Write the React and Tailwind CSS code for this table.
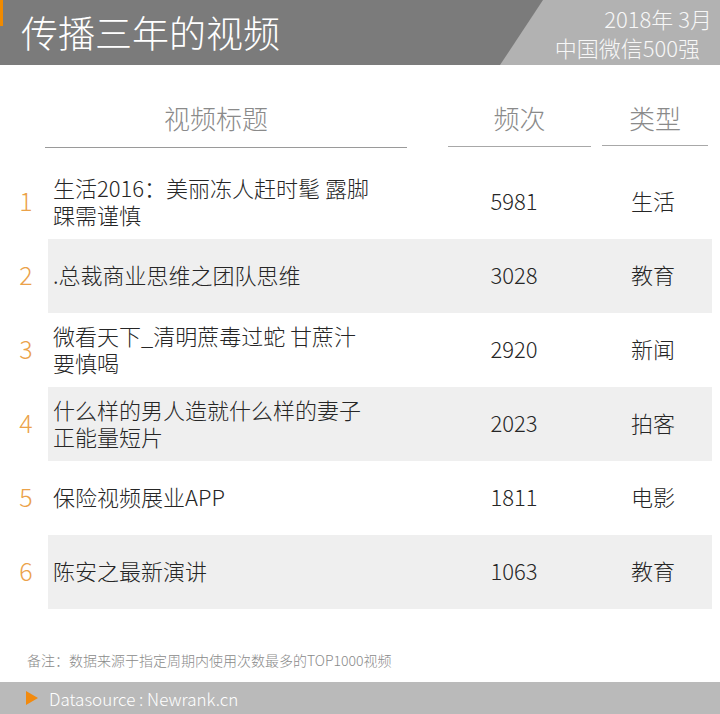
import React from "react";

const rows = [
  { n: "1", t: ["生活2016：美丽冻人赶时髦 露脚", "踝需谨慎"], c: "5981", k: "生活", g: false },
  { n: "2", t: [".总裁商业思维之团队思维"], c: "3028", k: "教育", g: true },
  { n: "3", t: ["微看天下_清明蔗毒过蛇 甘蔗汁", "要慎喝"], c: "2920", k: "新闻", g: false },
  { n: "4", t: ["什么样的男人造就什么样的妻子", "正能量短片"], c: "2023", k: "拍客", g: true },
  { n: "5", t: ["保险视频展业APP"], c: "1811", k: "电影", g: false },
  { n: "6", t: ["陈安之最新演讲"], c: "1063", k: "教育", g: true },
];

export default function App() {
  return (
    <div
      className="w-[720px] h-[714px] bg-white flex flex-col overflow-hidden"
      style={{ fontFamily: '"Noto Sans CJK SC", "Noto Sans", sans-serif' }}
    >
      {/* Header */}
      <div className="h-[65px] bg-[#7b7b7b] flex relative">
        <div className="absolute left-0 top-0 w-[3px] h-[26px] bg-[#f08a00]" />
        <div className="flex-1 flex items-center pl-[21px] text-white text-[37px] leading-none font-light pb-[1px]">
          传播三年的视频
        </div>
        <div className="w-[220px] bg-[#b2b2b2] [clip-path:polygon(43px_0,100%_0,100%_100%,0_100%)] flex flex-col items-end justify-center text-[#f7f7f7] text-[22px] leading-[29px] font-light">
          <div className="pr-[8px]">2018年 3月</div>
          <div className="pr-[20px]">中国微信500强</div>
        </div>
      </div>

      {/* Column headers */}
      <div className="h-[100px] flex pt-[36px] text-[#8a8a8a] text-[26px] leading-[34px] font-light">
        <div className="ml-[45px] w-[362px] flex flex-col">
          <div className="text-center pr-[20px]">视频标题</div>
          <div className="mt-[12px] h-[1px] bg-[#9a9a9a]" />
        </div>
        <div className="ml-[41px] w-[143px] flex flex-col">
          <div className="text-center">频次</div>
          <div className="mt-[11px] h-[1px] bg-[#a8a8a8]" />
        </div>
        <div className="ml-[11px] w-[106px] flex flex-col">
          <div className="text-center">类型</div>
          <div className="mt-[10px] h-[1px] bg-[#a8a8a8]" />
        </div>
      </div>

      {/* Rows */}
      <div className="flex flex-col">
        {rows.map((r) => (
          <div key={r.n} className="h-[74px] flex">
            <div className="w-[48px] pl-[4px] pb-[3px] flex items-center justify-center text-[#eba24a] text-[25px] font-light">
              {r.n}
            </div>
            <div
              className={
                "w-[664px] flex items-center pb-[3px] " + (r.g ? "bg-[#efefef]" : "bg-white")
              }
            >
              <div className="w-[392px] pl-[5px] text-[#262626] text-[22px] leading-[27px] font-light whitespace-nowrap">
                {r.t[0]}
                {r.t[1] ? <br /> : null}
                {r.t[1] || null}
              </div>
              <div className="w-[148px] text-center text-[#262626] text-[22px] font-light">
                {r.c}
              </div>
              <div className="w-[124px] pl-[6px] text-center text-[#262626] text-[22px] font-light">
                {r.k}
              </div>
            </div>
          </div>
        ))}
      </div>

      {/* Footnote */}
      <div className="mt-auto pl-[27px] pb-[12px] text-[#8a8a8a] text-[14px] leading-[20px] font-light">
        备注：数据来源于指定周期内使用次数最多的TOP1000视频
      </div>

      {/* Footer */}
      <div className="h-[32px] bg-[#bababa] flex items-center pl-[26px]">
        <svg width="12" height="14" viewBox="0 0 12 14" className="mr-[11px]">
          <polygon points="0,0 12,7 0,14" fill="#f28a0e" />
        </svg>
        <span className="text-white text-[17px] leading-none font-light">Datasource : Newrank.cn</span>
      </div>
    </div>
  );
}
